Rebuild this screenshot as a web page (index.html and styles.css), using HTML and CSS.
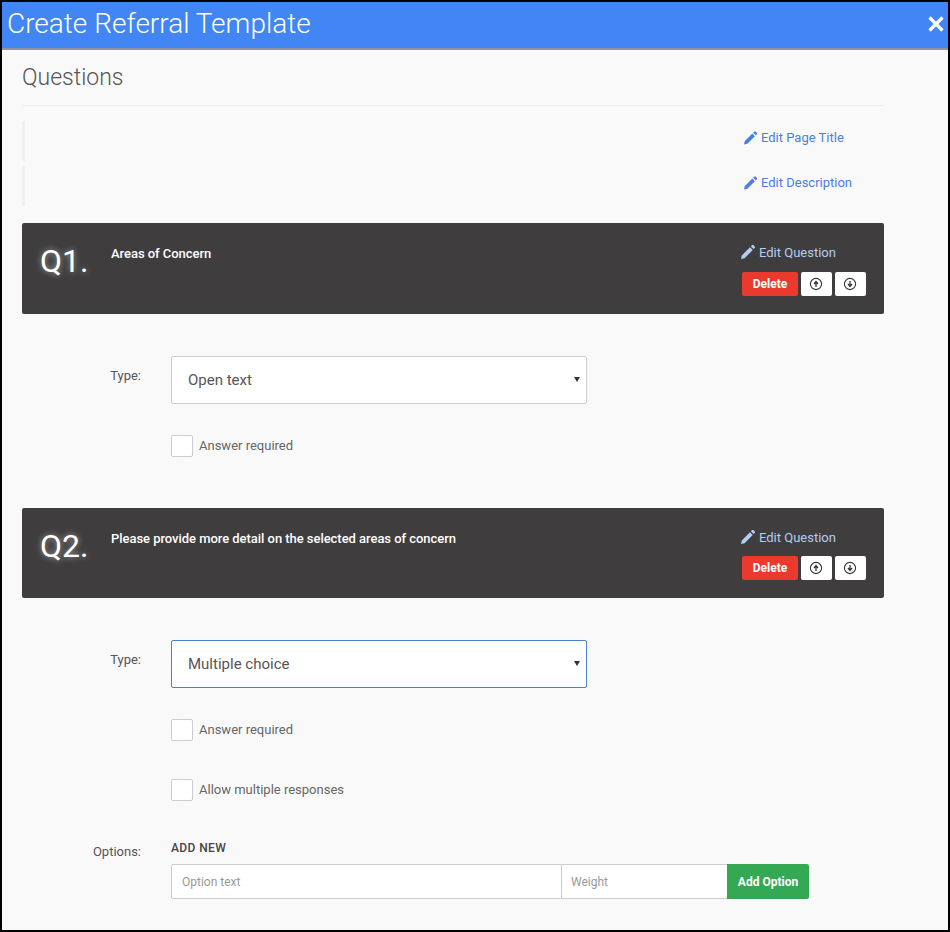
FILE: index.html
```html
<!DOCTYPE html>
<html lang="en">
<head>
<meta charset="utf-8">
<title>Create Referral Template</title>
<link rel="stylesheet" href="styles.css">
</head>
<body>
<svg class="defs" width="0" height="0" aria-hidden="true">
  <symbol id="pencil" viewBox="3 3 18 18"><path d="M3 21l1-4.6L14.5 5.9l3.6 3.6L7.6 20 3 21zM15.7 4.7l1.3-1.3c.6-.6 1.6-.6 2.2 0l1.4 1.4c.6.6.6 1.6 0 2.2l-1.3 1.3z" fill="currentColor"/></symbol>
  <symbol id="up" viewBox="0 0 14 14"><circle cx="7" cy="7" r="5.6" fill="none" stroke="currentColor" stroke-width="1.1"/><path d="M7 10V5M5 7l2-2.4L9 7" fill="none" stroke="currentColor" stroke-width="1.3"/></symbol>
  <symbol id="down" viewBox="0 0 14 14"><circle cx="7" cy="7" r="5.6" fill="none" stroke="currentColor" stroke-width="1.1"/><path d="M7 4v5M5 7l2 2.4L9 7" fill="none" stroke="currentColor" stroke-width="1.3"/></symbol>
</svg>
<div class="frame">
  <header class="topbar">
    <h1 class="topbar-title">Create Referral Template</h1>
    <button class="close" type="button" aria-label="Close">
      <svg width="18" height="18" viewBox="0 0 18 18"><path d="M2.5 2.5l13 13M15.5 2.5l-13 13" stroke="#fff" stroke-width="3.2" fill="none"/></svg>
    </button>
  </header>
  <main class="content">
    <h2 class="section-title">Questions</h2>
    <div class="meta-row"><a class="edit-link" href="#"><svg class="pencil"><use href="#pencil"/></svg>Edit Page Title</a></div>
    <div class="meta-row"><a class="edit-link" href="#"><svg class="pencil"><use href="#pencil"/></svg>Edit Description</a></div>

    <section class="q-card">
      <div class="q-num">Q1.</div>
      <div class="q-title">Areas of Concern</div>
      <div class="q-actions">
        <a class="q-edit" href="#"><svg class="pencil"><use href="#pencil"/></svg>Edit Question</a>
        <div class="q-buttons">
          <button class="btn-del" type="button">Delete</button>
          <button class="btn-move" type="button" aria-label="Move up"><svg width="14" height="14"><use href="#up"/></svg></button>
          <button class="btn-move" type="button" aria-label="Move down"><svg width="14" height="14"><use href="#down"/></svg></button>
        </div>
      </div>
    </section>
    <div class="q-body first">
      <div class="form-row">
        <span class="form-label type-label">Type:</span>
        <div class="select-wrap"><select class="select"><option>Open text</option></select></div>
      </div>
      <label class="check-row"><input class="check" type="checkbox"><span class="check-text">Answer required</span></label>
    </div>

    <section class="q-card second">
      <div class="q-num">Q2.</div>
      <div class="q-title">Please provide more detail on the selected areas of concern</div>
      <div class="q-actions">
        <a class="q-edit" href="#"><svg class="pencil"><use href="#pencil"/></svg>Edit Question</a>
        <div class="q-buttons">
          <button class="btn-del" type="button">Delete</button>
          <button class="btn-move" type="button" aria-label="Move up"><svg width="14" height="14"><use href="#up"/></svg></button>
          <button class="btn-move" type="button" aria-label="Move down"><svg width="14" height="14"><use href="#down"/></svg></button>
        </div>
      </div>
    </section>
    <div class="q-body">
      <div class="form-row">
        <span class="form-label type-label">Type:</span>
        <div class="select-wrap"><select class="select focused"><option>Multiple choice</option></select></div>
      </div>
      <label class="check-row"><input class="check" type="checkbox"><span class="check-text">Answer required</span></label>
      <label class="check-row"><input class="check" type="checkbox"><span class="check-text">Allow multiple responses</span></label>
      <div class="form-row options-row">
        <span class="form-label options-label">Options:</span>
        <div class="options">
          <div class="add-new">ADD NEW</div>
          <div class="option-inputs">
            <input class="input input-text" type="text" placeholder="Option text">
            <input class="input input-weight" type="text" placeholder="Weight">
            <button class="btn-add" type="button">Add Option</button>
          </div>
        </div>
      </div>
    </div>
  </main>
</div>
</body>
</html>
```
FILE: styles.css
```css
* { box-sizing: border-box; }
html, body { margin: 0; padding: 0; }
body { font-family: Roboto, "Liberation Sans", sans-serif; color: #555; }
.defs { position: absolute; }
.frame {
  width: 950px; height: 932px; overflow: hidden;
  border: 2px solid #000; background: #f9f9f9;
}
.topbar {
  height: 48px; background: #4285f4; border-bottom: 2px solid #8f949c;
  display: flex; align-items: center; justify-content: space-between;
  padding: 0 3px 0 5px;
}
.topbar-title { margin: -2px 0 0; font-size: 28px; font-weight: 300; color: #fff; line-height: 44px; }
.close { background: none; border: 0; padding: 0; display: flex; margin-top: -3px; }
.content { padding: 0 0 0 20px; width: 882px; }
.section-title {
  margin: 0 0 15px; height: 56px; padding-top: 14px;
  font-size: 23px; font-weight: 300; line-height: 28px; color: #555;
  border-bottom: 1px solid #eee;
}
.meta-row {
  height: 40px; margin-bottom: 5px; border-left: 3px solid #f0f0f0;
  display: flex; justify-content: flex-end; align-items: flex-start;
  padding: 8px 31px 0 0;
}
.meta-row .edit-link { width: 110px; }
.meta-row .pencil { margin: 0 4px 0 1px; width: 13px; }
.edit-link {
  display: flex; align-items: center; font-size: 13px; line-height: 18px;
  color: #4a7fe0; text-decoration: none; white-space: nowrap;
}
.pencil { width: 14px; height: 14px; margin-right: 4px; flex: none; }
.q-card {
  margin-top: 17px; height: 91px; background: #3f3d3e; border-radius: 2px;
  display: flex; color: #fff; padding: 0 18px;
}
.q-card.second { margin-top: 0; height: 90px; }
.q-card.second .q-buttons { margin-top: 10px; }
.q-num {
  width: 71px; font-size: 32px; line-height: 38px; padding-top: 19px;
  text-shadow: 0 0 6px rgba(255,255,255,.55);
}
.q-title { flex: 1; font-size: 13px; font-weight: 500; line-height: 18px; padding-top: 22px; letter-spacing: -.04px; }
.q-actions { width: 125px; padding-top: 20px; }
.q-edit {
  display: flex; align-items: center; height: 18px; font-size: 13px;
  color: #b4cdf5; text-decoration: none; white-space: nowrap;
}
.q-buttons { display: flex; margin-top: 11px; padding-left: 1px; }
.btn-del {
  width: 56px; height: 24px; border: 0; border-radius: 2px; background: #ea3a2e;
  color: #fff; font: 700 12px/24px Roboto, sans-serif; padding: 0;
}
.btn-move {
  width: 31px; height: 24px; margin-left: 3px; border: 0; border-radius: 2px;
  background: #fff; color: #333; padding: 0 2px 0 0; display: flex; align-items: center; justify-content: center;
}
.q-body { padding: 42px 0 0; height: 194px; }
.form-row { display: flex; }
.form-label { width: 149px; text-align: right; padding-right: 30px; font-size: 13px; line-height: 18px; color: #555; flex: none; }
.type-label { padding-top: 11px; }
.select-wrap { position: relative; width: 416px; height: 48px; }
.select-wrap::after {
  content: ""; position: absolute; right: 7px; top: 21px;
  border-left: 3px solid transparent; border-right: 3px solid transparent; border-top: 5px solid #333;
}
.select {
  appearance: none; -webkit-appearance: none; width: 100%; height: 100%;
  background: #fff; border: 1px solid #ccc; border-radius: 2px;
  padding: 0 16px; font: 400 15px Roboto, sans-serif; color: #555; outline: 0;
}
.select.focused { border-color: #4a80d0; }
.check-row {
  display: flex; align-items: center; margin: 31px 0 0 149px; height: 22px;
  font-size: 13px; color: #666;
}
.check-row + .check-row { margin-top: 38px; }
.check-text { padding-bottom: 2px; }
.check {
  appearance: none; -webkit-appearance: none; margin: 0 6px 0 0; width: 22px; height: 22px;
  background: #fff; border: 1px solid #ccc; border-radius: 2px;
}
.options-row { margin-top: 37px; }
.options-label { padding-top: 5px; }
.add-new { font-size: 12px; font-weight: 500; line-height: 18px; color: #444; margin-bottom: 7px; padding-top: 1px; height: 19px; letter-spacing: .4px; }
.option-inputs { display: flex; height: 35px; }
.input {
  height: 35px; background: #fff; border: 1px solid #ccc; border-radius: 0;
  padding: 0 10px; font: 400 12px Roboto, sans-serif; color: #555; outline: 0;
}
.input::placeholder { color: #999; opacity: 1; }
.input-text { width: 391px; border-radius: 2px 0 0 2px; }
.input-weight { width: 165px; border-left: 0; border-right: 0; padding-left: 9px; }
.btn-add {
  width: 82px; height: 35px; border: 0; border-radius: 0 2px 2px 0; background: #34a853;
  color: #fff; font: 700 12px Roboto, sans-serif; padding: 0;
}
```
